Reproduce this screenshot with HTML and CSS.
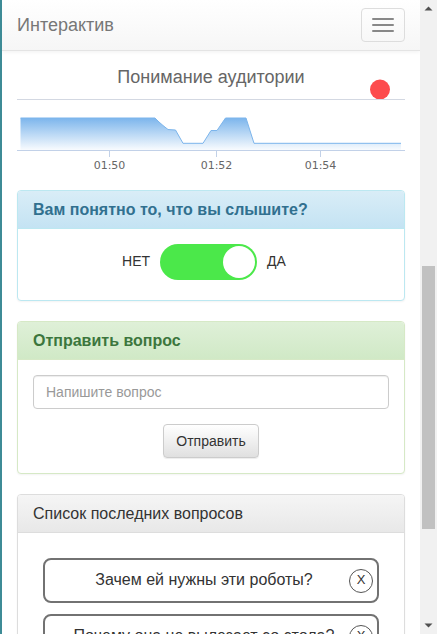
FILE: index.html
```html
<!DOCTYPE html>
<html lang="ru">
<head>
<meta charset="utf-8">
<title>Интерактив</title>
<link rel="stylesheet" href="styles.css">
</head>
<body>
<div class="window">
  <div class="page">
    <nav class="navbar">
      <span class="brand">Интерактив</span>
      <button class="navbar-toggle" type="button" aria-label="menu">
        <span class="icon-bar"></span>
        <span class="icon-bar"></span>
        <span class="icon-bar"></span>
      </button>
    </nav>
    <main class="container">
      <svg class="chart" width="388" height="120" viewBox="0 0 388 120">
        <defs>
          <linearGradient id="areaFill" x1="0" y1="0" x2="0" y2="1">
            <stop offset="0" stop-color="#7cb5ec" stop-opacity="1"/>
            <stop offset="1" stop-color="#7cb5ec" stop-opacity="0.05"/>
          </linearGradient>
        </defs>
        <text class="chart-title" x="194" y="28" text-anchor="middle">Понимание аудитории</text>
        <circle cx="363" cy="34.5" r="10" fill="#fd4b4d"/>
        <line x1="0" y1="44.5" x2="388" y2="44.5" stroke="#d3d8e2" stroke-width="1"/>
        <path d="M3.5 63 L138 63 L142 67 L146 70.5 L151 74.5 L158.5 75 L166 88.3 L186 88.3 L194 75.5 L200 75.5 L208.5 63 L229 63 L237 88.3 L384 88.3 L384 95 L3.5 95 Z" fill="url(#areaFill)"/>
        <path d="M3.5 63 L138 63 L142 67 L146 70.5 L151 74.5 L158.5 75 L166 88.3 L186 88.3 L194 75.5 L200 75.5 L208.5 63 L229 63 L237 88.3 L384 88.3" fill="none" stroke="#7cb5ec" stroke-width="1"/>
        <line x1="0" y1="95.5" x2="388" y2="95.5" stroke="#c2d1e8" stroke-width="1"/>
        <line x1="92.5" y1="95" x2="92.5" y2="102" stroke="#c2d1e8" stroke-width="1"/>
        <line x1="199.5" y1="95" x2="199.5" y2="102" stroke="#c2d1e8" stroke-width="1"/>
        <line x1="303.5" y1="95" x2="303.5" y2="102" stroke="#c2d1e8" stroke-width="1"/>
        <text class="axis-label" x="92.5" y="114" text-anchor="middle">01:50</text>
        <text class="axis-label" x="199.5" y="114" text-anchor="middle">01:52</text>
        <text class="axis-label" x="303.5" y="114" text-anchor="middle">01:54</text>
      </svg>

      <section class="panel panel-info">
        <div class="panel-heading"><h3 class="panel-title">Вам понятно то, что вы слышите?</h3></div>
        <div class="panel-body switch-row">
          <span class="switch-label">НЕТ</span>
          <span class="switch"><span class="knob"></span></span>
          <span class="switch-label">ДА</span>
        </div>
      </section>

      <section class="panel panel-success">
        <div class="panel-heading"><h3 class="panel-title">Отправить вопрос</h3></div>
        <div class="panel-body ask">
          <input class="form-control" type="text" placeholder="Напишите вопрос">
          <button class="btn" type="button">Отправить</button>
        </div>
      </section>

      <section class="panel panel-default">
        <div class="panel-heading"><h3 class="panel-title plain">Список последних вопросов</h3></div>
        <div class="panel-body questions">
          <div class="question">
            <span class="q-text">Зачем ей нужны эти роботы?</span>
            <span class="q-close">X</span>
          </div>
          <div class="question">
            <span class="q-text">Почему она не вылезает со стола?</span>
            <span class="q-close">X</span>
          </div>
        </div>
      </section>
    </main>
  </div>
  <div class="scrollbar" aria-hidden="true">
    <div class="sb-arrow">
      <svg width="17" height="17" viewBox="0 0 17 17"><polygon points="4.5,10.5 12.5,10.5 8.5,6.5" fill="#505050"/></svg>
    </div>
    <div class="sb-track"><div class="sb-thumb"></div></div>
    <div class="sb-arrow">
      <svg width="17" height="17" viewBox="0 0 17 17"><polygon points="4.5,6.5 12.5,6.5 8.5,10.5" fill="#505050"/></svg>
    </div>
  </div>
</div>
</body>
</html>
```

FILE: styles.css
```css
* { box-sizing: border-box; }

html, body {
  margin: 0;
  padding: 0;
  height: 634px;
  overflow: hidden;
  background: #fff;
}

body {
  font-family: "Liberation Sans", Arial, sans-serif;
  font-size: 14px;
  line-height: 1.42857;
  color: #333;
}

.window {
  display: flex;
  height: 634px;
}

.page {
  flex: 1;
  min-width: 0;
  border-left: 2px solid #3d8b96;
  overflow: hidden;
}

/* navbar */
.navbar {
  display: flex;
  justify-content: space-between;
  align-items: flex-start;
  height: 51px;
  background: linear-gradient(to bottom, #ffffff 0%, #f6f6f6 100%);
  border-bottom: 1px solid #e4e4e4;
  box-shadow: 0 1px 4px rgba(0, 0, 0, 0.06);
}

.brand {
  padding: 15px 15px;
  font-size: 18px;
  line-height: 20px;
  color: #777;
}

.navbar-toggle {
  margin: 8px 15px 0 0;
  width: 44px;
  height: 34px;
  padding: 9px 10px;
  background: transparent;
  border: 1px solid #ddd;
  border-radius: 4px;
  display: flex;
  flex-direction: column;
  gap: 4px;
}

.icon-bar {
  display: block;
  width: 22px;
  height: 2px;
  border-radius: 1px;
  background: #888;
}

/* content */
.container {
  padding: 4px 15px 0;
}

.chart {
  display: block;
  margin-bottom: 15px;
}

.chart-title {
  font-family: "Liberation Sans", Arial, sans-serif;
  font-size: 18px;
  fill: #666;
}

.axis-label {
  font-family: "DejaVu Sans", Verdana, sans-serif;
  font-size: 11px;
  fill: #666;
}

/* panels */
.panel {
  margin-bottom: 20px;
  background: #fff;
  border: 1px solid #ddd;
  border-radius: 4px;
  box-shadow: 0 1px 2px rgba(0, 0, 0, 0.05);
}

.panel-heading {
  height: 38px;
  padding: 0 15px;
  display: flex;
  align-items: center;
  border-bottom: 1px solid #ddd;
  border-radius: 3px 3px 0 0;
}

.panel-title {
  margin: 0;
  font-size: 16px;
  font-weight: bold;
  line-height: 18px;
}

.panel-title.plain {
  font-weight: normal;
  color: #333;
}

.panel-info { border-color: #bce8f1; }
.panel-info .panel-heading {
  background: linear-gradient(to bottom, #d9edf7 0%, #c4e3f3 100%);
  border-bottom-color: #bce8f1;
  color: #31708f;
}

.panel-success { border-color: #d6e9c6; }
.panel-success .panel-heading {
  background: linear-gradient(to bottom, #dff0d8 0%, #d0e9c6 100%);
  border-bottom-color: #d6e9c6;
  color: #3c763d;
}

.panel-default .panel-heading {
  background: linear-gradient(to bottom, #f5f5f5 0%, #e8e8e8 100%);
}

.panel-body {
  padding: 15px;
}

/* switch */
.switch-row {
  display: flex;
  justify-content: center;
  align-items: center;
  gap: 10px;
  padding: 15px 29px 20px 15px;
}

.switch-label {
  font-size: 14px;
  color: #333;
}

.switch {
  display: flex;
  justify-content: flex-end;
  align-items: center;
  width: 97px;
  height: 36px;
  padding: 2px;
  border-radius: 18px;
  background: #4be84a;
}

.knob {
  width: 32px;
  height: 32px;
  border-radius: 50%;
  background: #fff;
}

/* ask */
.ask {
  display: flex;
  flex-direction: column;
  align-items: center;
  gap: 15px;
}

.form-control {
  display: block;
  width: 100%;
  height: 34px;
  padding: 6px 12px;
  font-family: inherit;
  font-size: 14px;
  color: #555;
  border: 1px solid #ccc;
  border-radius: 4px;
  box-shadow: inset 0 1px 1px rgba(0, 0, 0, 0.075);
}

.form-control::placeholder {
  color: #999;
}

.btn {
  height: 34px;
  padding: 6px 12px;
  font-family: inherit;
  font-size: 14px;
  color: #333;
  background: linear-gradient(to bottom, #ffffff 0%, #e0e0e0 100%);
  border: 1px solid #ccc;
  border-radius: 4px;
  box-shadow: inset 0 1px 0 rgba(255, 255, 255, 0.15), 0 1px 1px rgba(0, 0, 0, 0.075);
}

/* questions */
.questions {
  display: flex;
  flex-direction: column;
  gap: 11px;
  padding: 25px 25px 15px;
}

.question {
  display: flex;
  align-items: center;
  height: 45px;
  padding: 0 4px 0 14px;
  border: 2px solid #727272;
  border-radius: 8px;
}

.q-text {
  flex: 1;
  text-align: center;
  font-size: 16px;
  color: #333;
  white-space: nowrap;
}

.q-close {
  flex: none;
  display: flex;
  align-items: center;
  justify-content: center;
  width: 24px;
  height: 24px;
  border: 1px solid #555;
  border-radius: 50%;
  font-size: 13px;
  color: #333;
}

/* scrollbar */
.scrollbar {
  flex: none;
  width: 17px;
  height: 634px;
  display: flex;
  flex-direction: column;
  background: #f1f1f1;
}

.sb-arrow {
  height: 17px;
  flex: none;
}

.sb-arrow svg { display: block; }

.sb-track {
  flex: 1;
  padding: 249px 2px 0;
}

.sb-thumb {
  height: 263px;
  background: #c1c1c1;
}
```
